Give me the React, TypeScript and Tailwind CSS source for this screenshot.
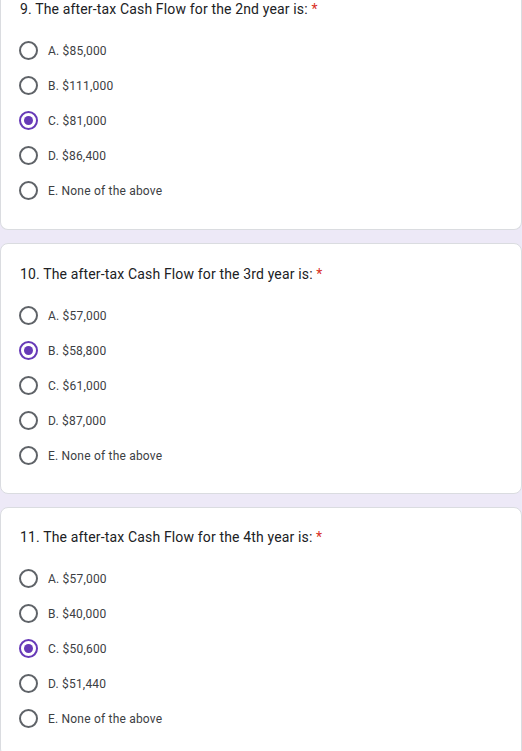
import React from "react";

type Q = { title: string; options: string[]; selected: number; pt: string; pb: string };

const questions: Q[] = [
  {
    title: "9. The after-tax Cash Flow for the 2nd year is:",
    options: ["A. $85,000", "B. $111,000", "C. $81,000", "D. $86,400", "E. None of the above"],
    selected: 2,
    pt: "pt-0",
    pb: "pb-[21px]",
  },
  {
    title: "10. The after-tax Cash Flow for the 3rd year is:",
    options: ["A. $57,000", "B. $58,800", "C. $61,000", "D. $87,000", "E. None of the above"],
    selected: 1,
    pt: "pt-[21px]",
    pb: "pb-[20px]",
  },
  {
    title: "11. The after-tax Cash Flow for the 4th year is:",
    options: ["A. $57,000", "B. $40,000", "C. $50,600", "D. $51,440", "E. None of the above"],
    selected: 2,
    pt: "pt-[20px]",
    pb: "pb-[20px]",
  },
];

function Radio({ on }: { on: boolean }) {
  return on ? (
    <span className="flex h-[19px] w-[19px] shrink-0 items-center justify-center rounded-full border-[2px] border-[#673ab7]">
      <span className="h-[9px] w-[9px] rounded-full bg-[#673ab7]" />
    </span>
  ) : (
    <span className="h-[19px] w-[19px] shrink-0 rounded-full border-[2px] border-[#5f6368]" />
  );
}

export default function App() {
  return (
    <div className="flex min-h-[751px] w-[522px] flex-col gap-[13px] bg-[#ede9f7] font-['Roboto',sans-serif]">
      {questions.map((q, i) => (
        <div
          key={i}
          className={`${i === 0 ? "rounded-b-lg border-t-0" : "rounded-lg"} border border-[#dadce0] bg-white ${q.pt} ${q.pb} ${i === 2 ? "flex-1" : ""}`}
        >
          <div className="pl-[19px] text-[14px] leading-[18px] tracking-[0.15px] text-[#202124]">
            {q.title} <span className="text-[#d93025]">*</span>
          </div>
          <div className="mt-[15px] flex flex-col">
            {q.options.map((o, j) => (
              <div key={j} className="flex h-[35px] items-center pl-[18px]">
                <Radio on={j === q.selected} />
                <span className="ml-[10px] text-[12px] leading-[16px] tracking-[0.2px] text-[#3c4043]">{o}</span>
              </div>
            ))}
          </div>
        </div>
      ))}
    </div>
  );
}
